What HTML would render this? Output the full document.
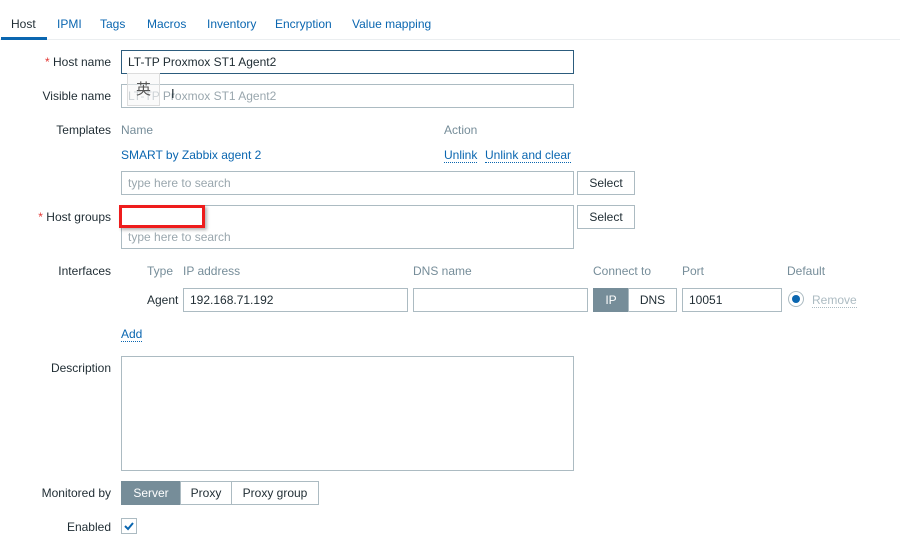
<!DOCTYPE html>
<html><head><meta charset="utf-8"><style>
body{margin:0;width:900px;height:546px;background:#fff;font-family:"Liberation Sans","Noto Sans CJK SC",sans-serif;font-size:12px;color:#1f2c33;position:relative;overflow:hidden}
.a{position:absolute;white-space:nowrap}
.lbl{position:absolute;right:789px;white-space:nowrap}
.in{position:absolute;box-sizing:border-box;border:1px solid #acbbc2;background:#fff;height:24px;padding:0 6px;line-height:23px}
.ph{color:#9aa7ae}
.btn{position:absolute;box-sizing:border-box;border:1px solid #acbbc2;background:#fff;height:24px;line-height:23px;text-align:center}
.lk{color:#0a66b0}
.dot{border-bottom:1px dotted #0a66b0}
.g{color:#768d99}
.star{color:#e33734}
</style></head><body>
<div class="a" style="left:11px;top:17px">Host</div>
<div class="a lk" style="left:57px;top:17px">IPMI</div>
<div class="a lk" style="left:100px;top:17px">Tags</div>
<div class="a lk" style="left:147px;top:17px">Macros</div>
<div class="a lk" style="left:207px;top:17px">Inventory</div>
<div class="a lk" style="left:275px;top:17px">Encryption</div>
<div class="a lk" style="left:352px;top:17px">Value mapping</div>
<div class="a" style="left:0;top:39px;width:900px;height:1px;background:#ebeef0"></div>
<div class="a" style="left:1px;top:37px;width:46px;height:3px;background:#0a66b0"></div>

<div class="lbl" style="top:55px"><span class="star">*</span> Host name</div>
<div class="in" style="left:121px;top:50px;width:453px;border-color:#2c5c7d">LT-TP Proxmox ST1 Agent2</div>
<div class="lbl" style="top:89px">Visible name</div>
<div class="in ph" style="left:121px;top:84px;width:453px">LT-TP Proxmox ST1 Agent2</div>
<div class="a" style="left:127px;top:73px;width:33px;height:33px;box-sizing:border-box;border:1px solid #ddd;background:rgba(245,245,245,.55);text-align:center;line-height:31px;font-size:15px;color:#555">英</div>
<div class="a" style="left:171px;top:86px;font-size:13px">I</div>

<div class="lbl" style="top:123px">Templates</div>
<div class="a g" style="left:121px;top:123px">Name</div>
<div class="a g" style="left:444px;top:123px">Action</div>
<div class="a lk" style="left:121px;top:148px">SMART by Zabbix agent 2</div>
<div class="a lk" style="left:444px;top:148px"><span class="dot">Unlink</span></div>
<div class="a lk" style="left:485px;top:148px"><span class="dot">Unlink and clear</span></div>
<div class="in ph" style="left:121px;top:171px;width:453px">type here to search</div>
<div class="btn" style="left:577px;top:171px;width:58px">Select</div>

<div class="lbl" style="top:210px"><span class="star">*</span> Host groups</div>
<div class="in" style="left:121px;top:205px;width:453px;height:44px"><span class="ph a" style="left:6px;top:24px;line-height:14px">type here to search</span></div>
<div class="btn" style="left:577px;top:205px;width:58px">Select</div>
<div class="a" style="left:119px;top:205px;width:86px;height:23px;box-sizing:border-box;border:3px solid #ee1c1c;background:#fff;box-shadow:2px 2px 3px rgba(0,0,0,.3)"></div>

<div class="lbl" style="top:264px">Interfaces</div>
<div class="a g" style="left:147px;top:264px">Type</div>
<div class="a g" style="left:183px;top:264px">IP address</div>
<div class="a g" style="left:413px;top:264px">DNS name</div>
<div class="a g" style="left:593px;top:264px">Connect to</div>
<div class="a g" style="left:682px;top:264px">Port</div>
<div class="a g" style="left:787px;top:264px">Default</div>
<div class="a" style="left:147px;top:293px">Agent</div>
<div class="in" style="left:183px;top:288px;width:225px">192.168.71.192</div>
<div class="in" style="left:413px;top:288px;width:175px"></div>
<div class="btn" style="left:593px;top:288px;width:36px;background:#768d99;border-color:#768d99;color:#fff">IP</div>
<div class="btn" style="left:628px;top:288px;width:49px">DNS</div>
<div class="in" style="left:682px;top:288px;width:100px">10051</div>
<div class="a" style="left:788px;top:291px;width:16px;height:16px;box-sizing:border-box;border:1px solid #acbbc2;border-radius:50%"></div>
<div class="a" style="left:792px;top:295px;width:8px;height:8px;border-radius:50%;background:#0a66b0"></div>
<div class="a" style="left:812px;top:293px;color:#acbbc2;border-bottom:1px dotted #acbbc2;line-height:14px">Remove</div>

<div class="a lk" style="left:121px;top:327px"><span class="dot">Add</span></div>

<div class="lbl" style="top:361px">Description</div>
<div class="in" style="left:121px;top:356px;width:453px;height:115px"></div>

<div class="lbl" style="top:486px">Monitored by</div>
<div class="btn" style="left:121px;top:481px;width:60px;background:#768d99;border-color:#768d99;color:#fff">Server</div>
<div class="btn" style="left:180px;top:481px;width:52px">Proxy</div>
<div class="btn" style="left:231px;top:481px;width:88px">Proxy group</div>

<div class="lbl" style="top:520px">Enabled</div>
<div class="a" style="left:121px;top:518px;width:16px;height:16px;box-sizing:border-box;border:1px solid #acbbc2"></div>
<svg class="a" style="left:121px;top:518px" width="16" height="16"><path d="M4 8 L7 11 L12 5" fill="none" stroke="#0a66b0" stroke-width="2"/></svg>
</body></html>
